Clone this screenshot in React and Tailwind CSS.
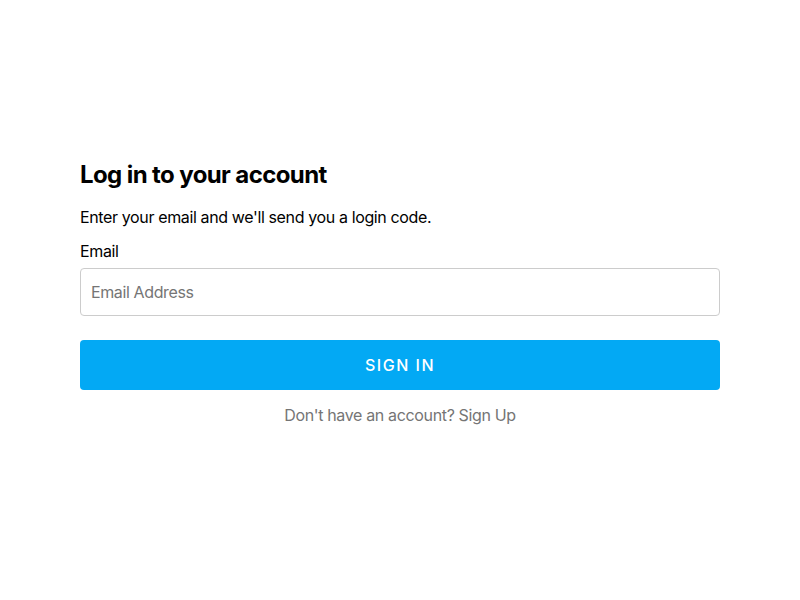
const App = () => {
  return (
    <div className="min-h-screen flex justify-center pt-[161px] bg-white font-['Inter','Liberation_Sans',sans-serif] text-black">
      <div className="w-[640px] flex flex-col">
        {/* Heading */}
        <h1 className="text-[24px] leading-7 font-bold tracking-[-0.6px]">Log in to your account</h1>
        <p className="mt-4 text-[16px] leading-6 tracking-[-0.37px]">Enter your email and we'll send you a login code.</p>

        {/* Email field */}
        <label className="mt-[10px] text-[16px] leading-6 tracking-[-0.35px]">Email</label>
        <input
          type="email"
          placeholder="Email Address"
          className="mt-[5px] h-12 w-full rounded border border-[#cccccc] px-[10px] text-[16px] tracking-[-0.38px] placeholder:text-[#757575] outline-none"
        />

        {/* Submit */}
        <button className="mt-6 h-[50px] w-full rounded bg-[#03a9f4] text-white text-[16px] font-medium tracking-[1.5px]">
          SIGN IN
        </button>

        <p className="mt-[13px] text-center text-[16px] leading-6 tracking-[-0.35px] text-[#757575]">
          Don't have an account? Sign Up
        </p>
      </div>
    </div>
  );
};

export default App;
